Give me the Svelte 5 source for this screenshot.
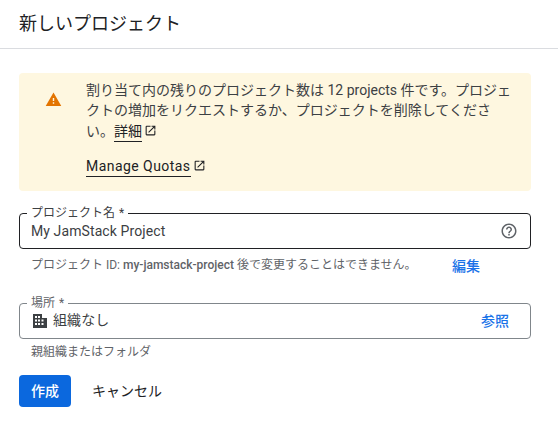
<script>
  let projectName = "My JamStack Project";
</script>

<div class="dialog">
  <h1 class="title">新しいプロジェクト</h1>

  <div class="content">
    <div class="banner">
      <svg class="warn" viewBox="0 0 24 24" width="17" height="17">
        <path fill="#e37400" d="M1 21h22L12 2 1 21zm12-3h-2v-2h2v2zm0-4h-2v-4h2v4z" />
      </svg>
      <div class="banner-text">
        <p class="message">
          割り当て内の残りのプロジェクト数は 12 projects 件です。プロジェクトの増加をリクエストするか、プロジェクトを削除してください。<a class="ext" href="#top">詳細</a><svg class="ext-icon" viewBox="0 0 24 24" width="13" height="13"><path fill="#202124" d="M19 19H5V5h7V3H5a2 2 0 0 0-2 2v14a2 2 0 0 0 2 2h14a2 2 0 0 0 2-2v-7h-2v7zM14 3v2h3.59l-9.83 9.83 1.41 1.41L19 6.41V10h2V3h-7z" /></svg>
        </p>
        <p class="quota">
          <a class="ext" href="#top">Manage Quotas</a><svg class="ext-icon" viewBox="0 0 24 24" width="13" height="13"><path fill="#202124" d="M19 19H5V5h7V3H5a2 2 0 0 0-2 2v14a2 2 0 0 0 2 2h14a2 2 0 0 0 2-2v-7h-2v7zM14 3v2h3.59l-9.83 9.83 1.41 1.41L19 6.41V10h2V3h-7z" /></svg>
        </p>
      </div>
    </div>

    <div class="field focused">
      <span class="label">プロジェクト名 <i>*</i></span>
      <span class="value">{projectName}</span>
      <svg class="help" viewBox="0 0 24 24" width="18" height="18">
        <path fill="#5f6368" d="M11 18h2v-2h-2v2zm1-16C6.48 2 2 6.48 2 12s4.48 10 10 10 10-4.48 10-10S17.52 2 12 2zm0 18c-4.41 0-8-3.59-8-8s3.59-8 8-8 8 3.59 8 8-3.59 8-8 8zm0-14c-2.21 0-4 1.79-4 4h2c0-1.1.9-2 2-2s2 .9 2 2c0 2-3 1.75-3 5h2c0-2.25 3-2.5 3-5 0-2.21-1.79-4-4-4z" />
      </svg>
    </div>
    <div class="hint-row">
      <span class="hint">プロジェクト ID: <b>my-jamstack-project</b> 後で変更することはできません。</span>
      <a class="link" href="#top">編集</a>
    </div>

    <div class="field place">
      <span class="label">場所 <i>*</i></span>
      <svg class="building" viewBox="0 0 14 14" width="14" height="14">
        <path fill="#3c4043" fill-rule="evenodd" d="M0 0h9v4h5v10H0zM2 2v2h2V2zm3 0v2h2V2zM2 5.5v2h2v-2zm3 0v2h2v-2zm3.5 0v2h2v-2zM2 9v2h2V9zm3 0v2h2V9zm3.5 0v2h2V9z" />
      </svg>
      <span class="value">組織なし</span>
      <a class="link browse" href="#top">参照</a>
    </div>
    <div class="hint parent">親組織またはフォルダ</div>

    <div class="actions">
      <button class="primary" type="button">作成</button>
      <button class="cancel" type="button">キャンセル</button>
    </div>
  </div>
</div>

<style>
  :global(body) {
    background: #fff;
    font-family: Roboto, "Noto Sans CJK JP", sans-serif;
    color: #3c4043;
  }
  .title {
    margin: 0;
    height: 49px;
    box-sizing: border-box;
    padding: 11px 19px 0;
    font-size: 18px;
    line-height: 26px;
    font-weight: 400;
    color: #202124;
    border-bottom: 1px solid #dadce0;
  }
  .content {
    padding: 24px 27px 0 19px;
  }
  .banner {
    display: flex;
    background: #fef7e0;
    border-radius: 4px;
    height: 118px;
    box-sizing: border-box;
    padding: 6.5px 19px 0 26px;
  }
  .warn {
    flex: none;
    margin: 11px 24px 0 0;
  }
  .message {
    margin: 0;
    font-size: 14px;
    line-height: 20.5px;
    color: #3c4043;
  }
  .quota {
    margin: 15px 0 0;
    font-size: 14px;
    line-height: 20px;
    color: #202124;
    letter-spacing: 0.45px;
  }
  .ext {
    color: #202124;
    text-decoration: none;
    border-bottom: 1px solid #202124;
    padding-bottom: 2px;
  }
  .ext-icon {
    margin-left: 2px;
    vertical-align: -1px;
  }
  .field {
    position: relative;
    display: flex;
    align-items: center;
    height: 34px;
    margin-top: 22px;
    padding: 0 12px 0 11px;
    border: 1px solid #80868b;
    border-radius: 4px;
    box-sizing: content-box;
    width: 487px;
    font-size: 14px;
    color: #3c4043;
  }
  .field.focused {
    border-color: #202124;
  }
  .label {
    position: absolute;
    top: -8px;
    left: 7px;
    padding: 0 4px;
    background: #fff;
    font-size: 12px;
    line-height: 14px;
    color: #5f6368;
  }
  .label i {
    font-style: normal;
    margin-left: 1px;
  }
  .focused .label {
    color: #3c4043;
  }
  .value {
    flex: 1;
    line-height: 20px;
    letter-spacing: 0.1px;
  }
  .help {
    flex: none;
  }
  .hint-row {
    display: flex;
    align-items: center;
    padding: 5px 0 0 12px;
    height: 22px;
  }
  .hint {
    font-size: 12px;
    line-height: 16px;
    color: #5f6368;
  }
  .hint b {
    font-weight: 500;
    color: #5f6368;
  }
  .hint-row .link {
    margin-left: auto;
    margin-right: 51px;
  }
  .link {
    font-size: 14px;
    font-weight: 500;
    color: #1a73e8;
    text-decoration: none;
  }
  .place {
    margin-top: 27px;
  }
  .place .value,
  .place .link {
    padding-bottom: 2px;
  }
  .building {
    flex: none;
    margin: 0 6px 0 2px;
  }
  .browse {
    margin-right: 9px;
  }
  .parent {
    padding: 5px 0 0 12px;
  }
  .actions {
    display: flex;
    align-items: center;
    margin-top: 15px;
  }
  .primary {
    width: 52px;
    height: 32px;
    padding: 0 0 2px;
    border: 0;
    border-radius: 4px;
    background: #0b68de;
    color: #fff;
    font: 500 14px Roboto, "Noto Sans CJK JP", sans-serif;
  }
  .cancel {
    margin-left: 21px;
    padding: 0 0 3px;
    border: 0;
    background: none;
    color: #202124;
    font: 400 14px Roboto, "Noto Sans CJK JP", sans-serif;
  }
</style>
